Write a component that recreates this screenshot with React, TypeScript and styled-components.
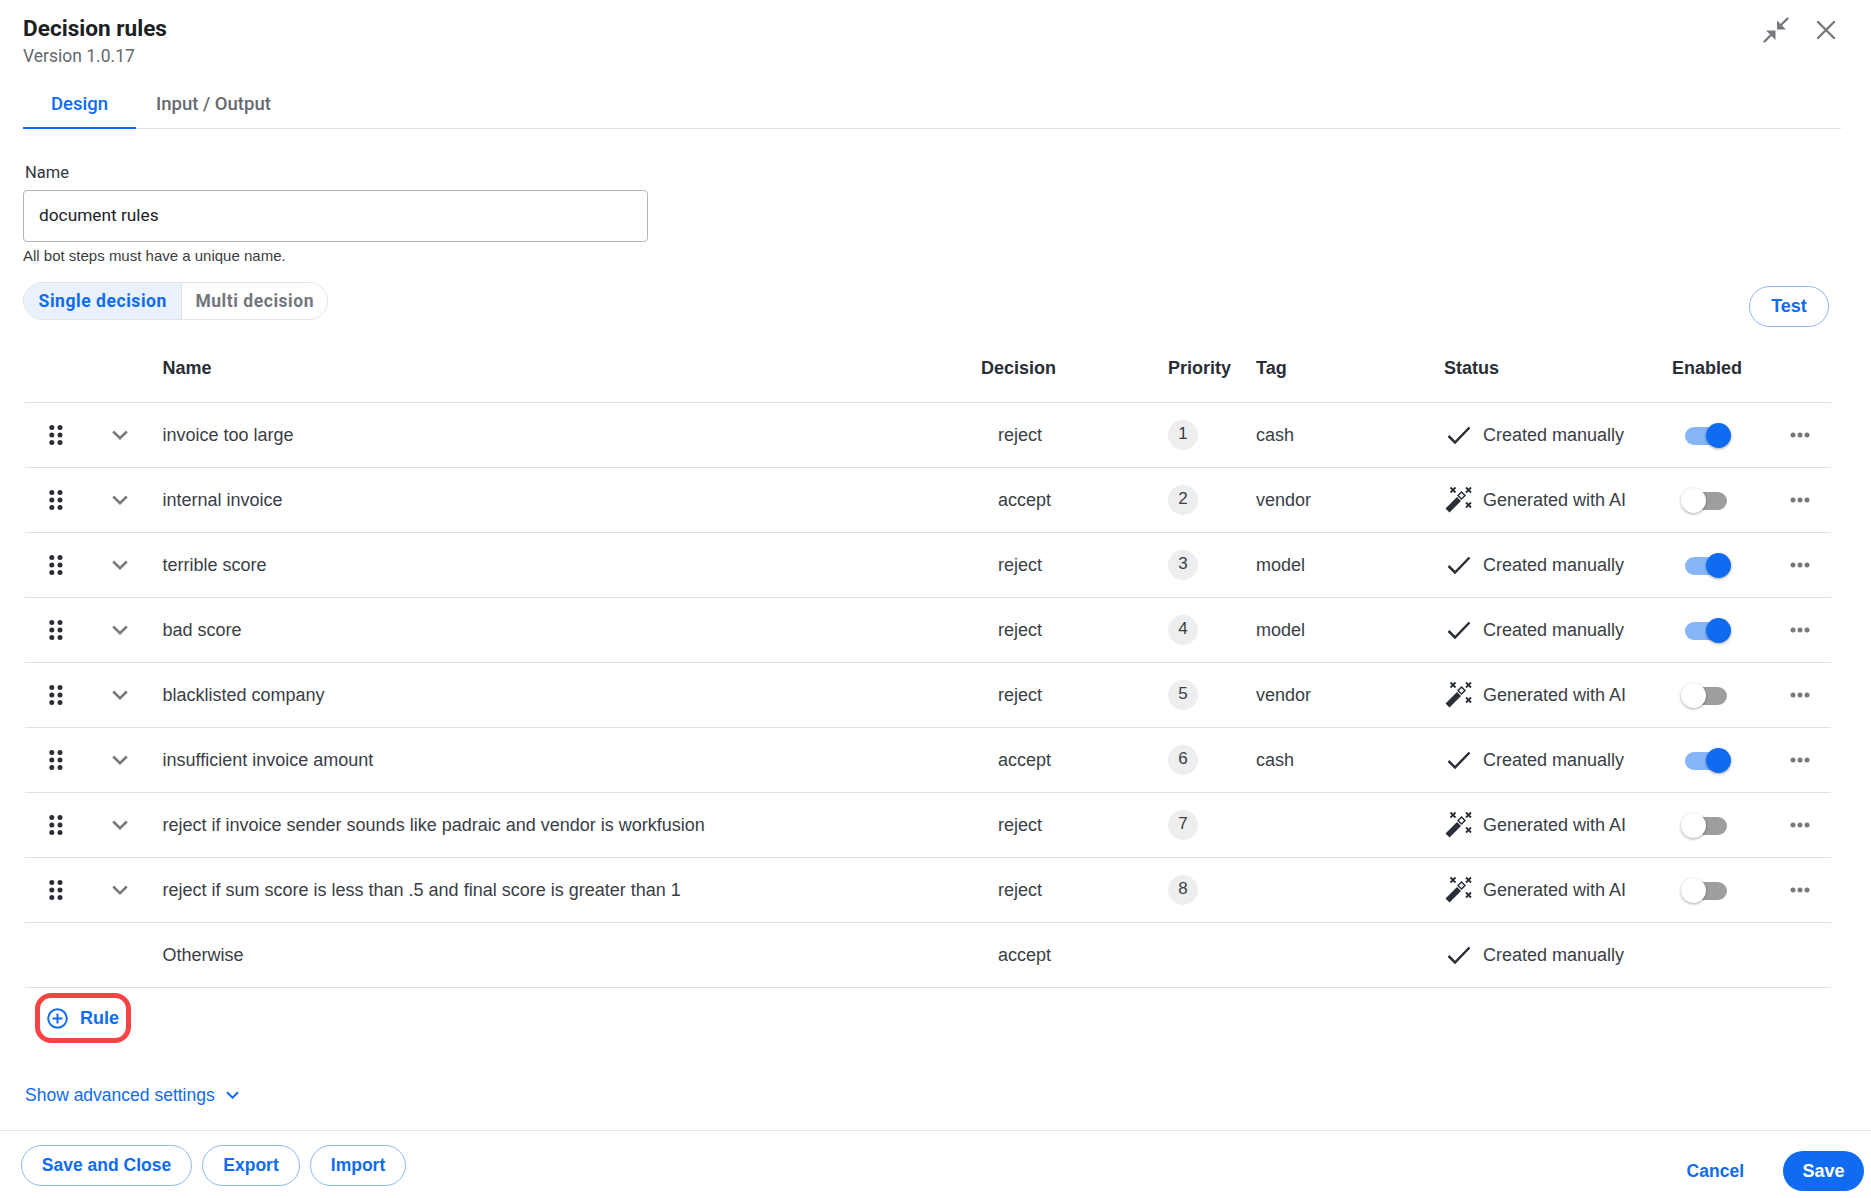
import React from 'react';
import styled, { createGlobalStyle } from 'styled-components';

const GlobalStyle = createGlobalStyle`
  html, body { margin: 0; padding: 0; background: #fff; }
  body { font-family: "Liberation Sans", Arial, sans-serif; color: #2a2e37; }
  * { box-sizing: border-box; }
`;

const Page = styled.div`
  width: 100%;
  min-height: 100vh;
  display: flex;
  flex-direction: column;
`;

const Main = styled.div`
  padding: 0 30px 0 23px;
  flex: 1;
`;

const TopBar = styled.div`
  display: flex;
  justify-content: space-between;
  height: 85px;
  padding-top: 15px;
`;

const Title = styled.div`
  font-family: Roboto, sans-serif;
  font-weight: 700;
  font-size: 22.6px;
  line-height: 28px;
  margin-bottom: 1px;
  color: #1c1f24;
`;

const Version = styled.div`
  font-family: Roboto, sans-serif;
  font-size: 17.5px;
  line-height: 24px;
  color: #65686d;
`;

const WindowIcons = styled.div`
  display: flex;
  align-items: flex-start;
  gap: 27px;
  margin-top: 2px;
  margin-right: 5px;
`;

const Tabs = styled.div`
  display: flex;
  height: 44px;
  border-bottom: 1px solid #e0e0e0;
`;

const Tab = styled.div<{ $active?: boolean }>`
  font-family: Roboto, sans-serif;
  font-size: 18.5px;
  font-weight: 500;
  width: ${p => (p.$active ? '113px' : 'auto')};
  padding: ${p => (p.$active ? '0' : '0 0 0 20px')};
  text-align: ${p => (p.$active ? 'center' : 'left')};
  line-height: 38px;
  height: 44px;
  color: ${p => (p.$active ? '#0f6cf0' : '#666a70')};
  border-bottom: ${p => (p.$active ? '2px solid #0f6cf0' : 'none')};
`;

const FieldLabel = styled.div`
  font-family: Roboto, sans-serif;
  font-size: 16.5px;
  line-height: 20px;
  color: #33373d;
  margin: 34px 0 7px 2px;
`;

const NameInput = styled.div`
  width: 625px;
  height: 52px;
  border: 1px solid #b5b5b5;
  border-radius: 4px;
  padding-left: 15px;
  font-family: Roboto, sans-serif;
  font-size: 17.3px;
  line-height: 49px;
  color: #212327;
`;

const Help = styled.div`
  font-size: 15px;
  line-height: 18px;
  margin-top: 5px;
  color: #3a3d42;
`;

const ModeRow = styled.div`
  display: flex;
  justify-content: space-between;
  align-items: flex-start;
  margin-top: 17px;
  padding-right: 12px;
`;

const Segmented = styled.div`
  display: flex;
  height: 38px;
  width: 305px;
  border: 1px solid #e3e3e3;
  border-radius: 19px;
  overflow: hidden;
`;

const Segment = styled.div<{ $active?: boolean }>`
  font-family: Roboto, sans-serif;
  font-weight: 700;
  font-size: 17.5px;
  letter-spacing: 0.55px;
  line-height: 36px;
  text-align: center;
  width: ${p => (p.$active ? '159px' : '145px')};
  color: ${p => (p.$active ? '#0f6cf0' : '#73767b')};
  background: ${p => (p.$active ? '#e9f1fc' : '#fff')};
  border-right: ${p => (p.$active ? '1px solid #e0e0e0' : 'none')};
`;

const PillButton = styled.button<{ $w: number }>`
  font-family: "Liberation Sans", Arial, sans-serif;
  font-weight: 700;
  font-size: 17.5px;
  color: #0f6cf0;
  background: #fff;
  border: 1px solid #8db8f2;
  border-radius: 21px;
  height: 41px;
  width: ${p => p.$w}px;
  padding: 0;
`;

const TestButton = styled(PillButton)`
  margin-top: 4px;
  font-size: 18px;
`;

const Table = styled.div`
  margin: 7px 10px 0 2px;
`;

const Row = styled.div<{ $head?: boolean }>`
  display: grid;
  grid-template-columns: 62px 66px 828px 187px 88px 187px 229px 98px 61px;
  align-items: center;
  height: ${p => (p.$head ? '69px' : '65px')};
  border-bottom: 1px solid #e0e0e0;
  font-size: 18px;
  color: #3a3e46;
`;

const HeadCell = styled.div<{ $pad?: number }>`
  font-weight: 700;
  color: #2a2e36;
  padding-left: ${p => p.$pad ?? 0}px;
`;

const IconCell = styled.div<{ $shift?: number }>`
  display: flex;
  justify-content: center;
  align-items: center;
  margin-left: ${p => p.$shift ?? 0}px;
`;

const NameCell = styled.div`
  padding-left: 9.5px;
`;

const DecisionCell = styled.div`
  padding-left: 17px;
`;

const PriorityBadge = styled.div`
  width: 30px;
  height: 30px;
  border-radius: 50%;
  background: #eeeeee;
  text-align: center;
  font-size: 17px;
  line-height: 27px;
`;

const StatusCell = styled.div`
  display: flex;
  align-items: center;
`;

const StatusIcon = styled.div`
  width: 32px;
  margin-right: 8px;
  display: flex;
  justify-content: center;
  flex-shrink: 0;
`;

const ToggleWrap = styled.div`
  position: relative;
  width: 42px;
  height: 18px;
  margin: 1px 0 0 13px;
`;

const Track = styled.div<{ $on: boolean }>`
  width: 100%;
  height: 100%;
  border-radius: 9px;
  background: ${p => (p.$on ? '#86b6f8' : '#9e9e9e')};
`;

const Thumb = styled.div<{ $on: boolean }>`
  position: absolute;
  top: -4px;
  left: ${p => (p.$on ? '21px' : '-4px')};
  width: 25px;
  height: 25px;
  border-radius: 50%;
  background: ${p => (p.$on ? '#0f6cf0' : '#fff')};
  box-shadow: 0 1px 3px rgba(0, 0, 0, 0.35);
`;

const RuleButton = styled.div`
  display: inline-flex;
  align-items: center;
  gap: 12px;
  height: 50px;
  width: 96px;
  margin: 5px 0 0 12px;
  padding-left: 7px;
  border: 5px solid #f64444;
  border-radius: 16px;
  font-weight: 700;
  font-size: 18px;
  color: #0f6cf0;
  white-space: nowrap;
`;

const Advanced = styled.div`
  display: flex;
  align-items: center;
  gap: 11px;
  margin: 41px 0 0 2px;
  font-size: 17.5px;
  line-height: 22px;
  color: #0f6cf0;
`;

const Footer = styled.div`
  height: 68px;
  border-top: 1px solid #e6e6e6;
  display: flex;
  justify-content: space-between;
  padding: 14px 7px 0 21px;
`;

const FooterGroup = styled.div<{ $gap: number; $top?: number }>`
  display: flex;
  gap: ${p => p.$gap}px;
  align-items: center;
  height: 40px;
  margin-top: ${p => p.$top ?? 0}px;
`;

const CancelLink = styled.div`
  font-weight: 700;
  font-size: 17.5px;
  color: #0f6cf0;
`;

const SaveButton = styled.button`
  width: 81px;
  height: 40px;
  border: none;
  border-radius: 20px;
  background: #0f6cf0;
  color: #fff;
  font-family: "Liberation Sans", Arial, sans-serif;
  font-weight: 700;
  font-size: 18px;
  padding: 0;
`;

const CollapseIcon = () => (
  <svg width="26" height="26" viewBox="0 0 26 26" fill="none">
    <path d="M24.500 1.500 18 8M1.500 24.500 8 18" stroke="#77797e" strokeWidth="2.400" strokeLinecap="round" />
    <path d="M14 3.500V12.500h9zM3 13.500h9.500V23z" fill="#77797e" />
  </svg>
);

const CloseIcon = () => (
  <svg width="20" height="20" viewBox="0 0 20 20" fill="none" style={{ marginTop: 3 }}>
    <path d="M2 2l16 16M18 2 2 18" stroke="#77797e" strokeWidth="2.400" strokeLinecap="round" />
  </svg>
);

const GripIcon = () => (
  <svg width="14" height="20" viewBox="0 0 14 20" fill="#2a2e37">
    {[2.5, 10, 17.500].map(y => (
      <React.Fragment key={y}>
        <circle cx="2.8" cy={y} r="2.500" />
        <circle cx="11" cy={y} r="2.500" />
      </React.Fragment>
    ))}
  </svg>
);

const ChevronIcon = ({ color, size = 16 }: { color: string; size?: number }) => (
  <svg width={size} height={size * 0.625} viewBox="0 0 16 10" fill="none">
    <path d="M1.200 1.500 8 8.200l6.800-6.700" stroke={color} strokeWidth="2.500" />
  </svg>
);

const CheckIcon = () => (
  <svg width="24" height="18" viewBox="0 0 24 18" fill="none">
    <path d="M1.500 10l6.500 6.500L22.500 1.500" stroke="#2a2e37" strokeWidth="2.500" />
  </svg>
);

const WandIcon = () => (
  <svg width="28" height="28" viewBox="0 0 28 28" fill="#2a2e37">
    <path d="M0.500 22.500 12 11l4 4L4.500 26.500z" />
    <path d="M13 9.500 16.500 6 20 9.500 16.500 13z" fill="none" stroke="#2a2e37" strokeWidth="1.500" />
    <path
      d="M5.500 1.500l5 5M10.500 1.500l-5 5M21 1.500l5 5M26 1.500l-5 5M21 16.500l5 5M26 16.500l-5 5"
      stroke="#2a2e37"
      strokeWidth="1.800"
      fill="none"
    />
  </svg>
);

const MoreIcon = () => (
  <svg width="20" height="6" viewBox="0 0 20 6" fill="#77797d">
    <circle cx="3" cy="3" r="2.500" />
    <circle cx="10" cy="3" r="2.500" />
    <circle cx="17" cy="3" r="2.500" />
  </svg>
);

const PlusCircleIcon = () => (
  <svg width="21" height="21" viewBox="0 0 21 21" fill="none" stroke="#0f6cf0" strokeWidth="2">
    <circle cx="10.500" cy="10.500" r="9.300" />
    <path d="M10.500 5.500v10M5.500 10.500h10" />
  </svg>
);

type Rule = { name: string; decision: string; tag: string; ai: boolean };

const rules: Rule[] = [
  { name: 'invoice too large', decision: 'reject', tag: 'cash', ai: false },
  { name: 'internal invoice', decision: 'accept', tag: 'vendor', ai: true },
  { name: 'terrible score', decision: 'reject', tag: 'model', ai: false },
  { name: 'bad score', decision: 'reject', tag: 'model', ai: false },
  { name: 'blacklisted company', decision: 'reject', tag: 'vendor', ai: true },
  { name: 'insufficient invoice amount', decision: 'accept', tag: 'cash', ai: false },
  { name: 'reject if invoice sender sounds like padraic and vendor is workfusion', decision: 'reject', tag: '', ai: true },
  { name: 'reject if sum score is less than .5 and final score is greater than 1', decision: 'reject', tag: '', ai: true },
];

function Status({ ai }: { ai: boolean }) {
  return (
    <StatusCell>
      <StatusIcon>{ai ? <WandIcon /> : <CheckIcon />}</StatusIcon>
      {ai ? 'Generated with AI' : 'Created manually'}
    </StatusCell>
  );
}

function App() {
  return (
    <Page>
      <GlobalStyle />
      <Main>
        <TopBar>
          <div>
            <Title>Decision rules</Title>
            <Version>Version 1.0.17</Version>
          </div>
          <WindowIcons>
            <CollapseIcon />
            <CloseIcon />
          </WindowIcons>
        </TopBar>
        <Tabs>
          <Tab $active>Design</Tab>
          <Tab>Input / Output</Tab>
        </Tabs>
        <FieldLabel>Name</FieldLabel>
        <NameInput>document rules</NameInput>
        <Help>All bot steps must have a unique name.</Help>
        <ModeRow>
          <Segmented>
            <Segment $active>Single decision</Segment>
            <Segment>Multi decision</Segment>
          </Segmented>
          <TestButton $w={80}>Test</TestButton>
        </ModeRow>
        <Table>
          <Row $head>
            <div />
            <div />
            <HeadCell $pad={9.5}>Name</HeadCell>
            <HeadCell>Decision</HeadCell>
            <HeadCell>Priority</HeadCell>
            <HeadCell>Tag</HeadCell>
            <HeadCell $pad={1}>Status</HeadCell>
            <HeadCell>Enabled</HeadCell>
            <div />
          </Row>
          {rules.map((rule, index) => (
            <Row key={rule.name}>
              <IconCell><GripIcon /></IconCell>
              <IconCell><ChevronIcon color="#77797d" /></IconCell>
              <NameCell>{rule.name}</NameCell>
              <DecisionCell>{rule.decision}</DecisionCell>
              <div><PriorityBadge>{index + 1}</PriorityBadge></div>
              <div>{rule.tag}</div>
              <Status ai={rule.ai} />
              <ToggleWrap>
                <Track $on={!rule.ai} />
                <Thumb $on={!rule.ai} />
              </ToggleWrap>
              <IconCell $shift={-1}><MoreIcon /></IconCell>
            </Row>
          ))}
          <Row>
            <div />
            <div />
            <NameCell>Otherwise</NameCell>
            <DecisionCell>accept</DecisionCell>
            <div />
            <div />
            <Status ai={false} />
            <div />
            <div />
          </Row>
        </Table>
        <RuleButton>
          <PlusCircleIcon />
          Rule
        </RuleButton>
        <Advanced>
          Show advanced settings
          <ChevronIcon color="#0f6cf0" size={13} />
        </Advanced>
      </Main>
      <Footer>
        <FooterGroup $gap={10}>
          <PillButton $w={171}>Save and Close</PillButton>
          <PillButton $w={98}>Export</PillButton>
          <PillButton $w={96}>Import</PillButton>
        </FooterGroup>
        <FooterGroup $gap={39} $top={6}>
          <CancelLink>Cancel</CancelLink>
          <SaveButton>Save</SaveButton>
        </FooterGroup>
      </Footer>
    </Page>
  );
}

export default App;
